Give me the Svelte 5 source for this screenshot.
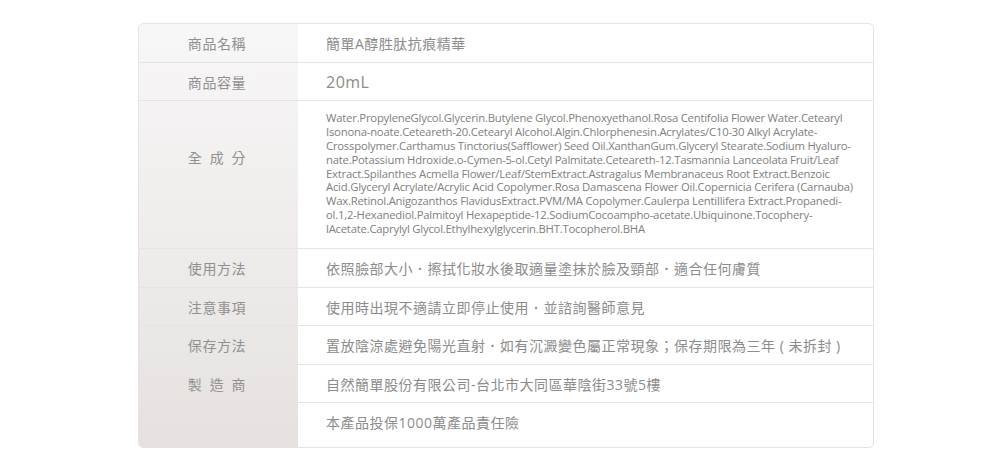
<script>
    const lines = [
        'Water.PropyleneGlycol.Glycerin.Butylene Glycol.Phenoxyethanol.Rosa Centifolia Flower Water.Cetearyl',
        'Isonona-noate.Ceteareth-20.Cetearyl Alcohol.Algin.Chlorphenesin.Acrylates/C10-30 Alkyl Acrylate-',
        'Crosspolymer.Carthamus Tinctorius(Safflower) Seed Oil.XanthanGum.Glyceryl Stearate.Sodium Hyaluro-',
        'nate.Potassium Hdroxide.o-Cymen-5-ol.Cetyl Palmitate.Ceteareth-12.Tasmannia Lanceolata Fruit/Leaf',
        'Extract.Spilanthes Acmella Flower/Leaf/StemExtract.Astragalus Membranaceus Root Extract.Benzoic',
        'Acid.Glyceryl Acrylate/Acrylic Acid Copolymer.Rosa Damascena Flower Oil.Copernicia Cerifera (Carnauba)',
        'Wax.Retinol.Anigozanthos FlavidusExtract.PVM/MA Copolymer.Caulerpa Lentillifera Extract.Propanedi-',
        'ol.1,2-Hexanediol.Palmitoyl Hexapeptide-12.SodiumCocoampho-acetate.Ubiquinone.Tocophery-',
        'lAcetate.Caprylyl Glycol.Ethylhexylglycerin.BHT.Tocopherol.BHA'
    ];

    const rows = [
        { label: '商品名稱', value: '簡單A醇胜肽抗痕精華', h: 39 },
        { label: '商品容量', value: '20mL', h: 38, cls: 'big' },
        { label: '全 成 分', lines, h: 148, cls: 'tall' },
        { label: '使用方法', value: '依照臉部大小．擦拭化妝水後取適量塗抹於臉及頸部．適合任何膚質', h: 39 },
        { label: '注意事項', value: '使用時出現不適請立即停止使用．並諮詢醫師意見', h: 38 },
        { label: '保存方法', value: '置放陰涼處避免陽光直射．如有沉澱變色屬正常現象；保存期限為三年 ( 未拆封 )', h: 39 },
        { label: '製 造 商', value: '自然簡單股份有限公司-台北市大同區華陰街33號5樓', h: 38 },
        { label: '', value: '本產品投保1000萬產品責任險', h: 44, cls: 'last' }
    ];
</script>

<div class="page">
    <div class="card">
        <div class="side"></div>
        <div class="rows">
            {#each rows as row}
                <div class="row {row.cls || ''}" style="height: {row.h}px">
                    <div class="label">{row.label}</div>
                    <div class="value">
                        {#if row.lines}
                            <div class="ingredients">
                                {#each row.lines as line}
                                    <div>{line}</div>
                                {/each}
                            </div>
                        {:else}
                            {row.value}
                        {/if}
                    </div>
                </div>
            {/each}
        </div>
    </div>
</div>

<style>
    :global(body) {
        margin: 0;
        background: #fff;
    }
    .page {
        height: 468px;
        padding: 23px 126px 0 138px;
        box-sizing: border-box;
        font-family: "Open Sans", "Noto Sans CJK TC", sans-serif;
        color: #8c8c8c;
    }
    .card {
        position: relative;
        width: 736px;
        box-sizing: border-box;
        border: 1px solid #e4e4e4;
        border-radius: 5px;
        overflow: hidden;
    }
    .side {
        position: absolute;
        left: 0;
        top: 0;
        bottom: 0;
        width: 159px;
        background: linear-gradient(180deg, #f8f7f7 0%, #e6e1df 100%);
    }
    .rows {
        position: relative;
    }
    .row {
        display: flex;
        align-items: center;
        box-sizing: border-box;
        border-bottom: 1px solid #e4e4e4;
    }
    .row.last {
        border-bottom: 0;
        padding-bottom: 6px;
    }
    .label {
        width: 159px;
        flex: none;
        box-sizing: border-box;
        padding-right: 3px;
        text-align: center;
        font-size: 14px;
        letter-spacing: 0.6px;
        word-spacing: 3px;
        color: #909090;
    }
    .tall .label {
        padding-bottom: 36px;
    }
    .value {
        padding-left: 28px;
        font-size: 14px;
        letter-spacing: 0.5px;
        white-space: nowrap;
    }
    .big .value {
        font-size: 16px;
    }
    .ingredients {
        font-size: 11.3px;
        line-height: 13.9px;
        letter-spacing: -0.22px;
        padding-bottom: 2px;
        color: #808080;
    }
</style>
